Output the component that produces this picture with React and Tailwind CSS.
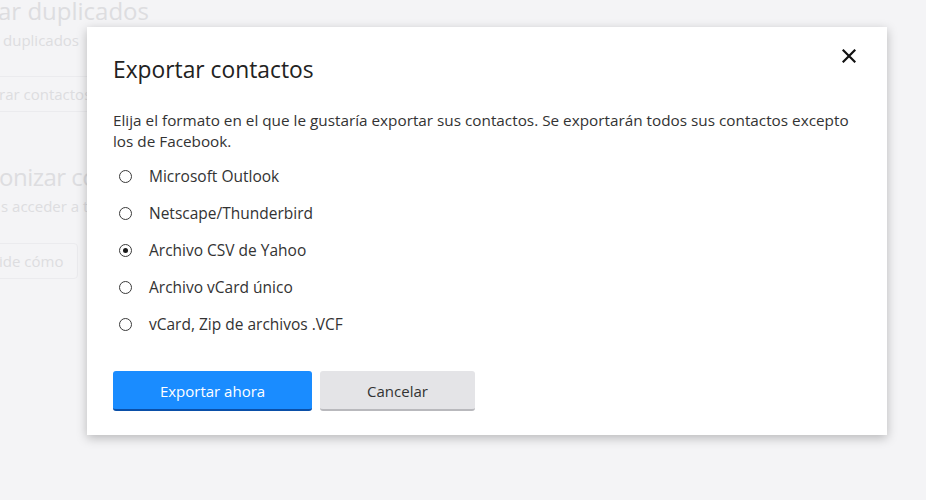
import React from "react";

const options = [
  "Microsoft Outlook",
  "Netscape/Thunderbird",
  "Archivo CSV de Yahoo",
  "Archivo vCard único",
  "vCard, Zip de archivos .VCF",
];

const Radio = ({ checked }) => (
  <span className="w-[13px] h-[13px] rounded-full border-[1.5px] border-[#3a3a3a] flex items-center justify-center shrink-0">
    {checked && <span className="w-[5px] h-[5px] rounded-full bg-[#1a1a1a]" />}
  </span>
);

export default function App() {
  const selected = 2;

  return (
    <div
      className="relative w-[926px] h-[500px] overflow-hidden bg-[#f4f4f6]"
      style={{ fontFamily: '"Open Sans", "Noto Sans", sans-serif' }}
    >
      {/* faded page behind the dialog */}
      <div className="flex flex-col text-[#dddde0] whitespace-nowrap">
        <p className="text-[24px] leading-[30px] -mt-[4px] -ml-[2px]">ar duplicados</p>
        <p className="text-[15px] leading-[20px] mt-[4px] ml-[3px]">duplicados</p>
        <div className="mt-[26px] -ml-[10px] w-[120px] h-[36px] border border-[#ebebee] rounded-[4px] flex items-center pl-[8px] text-[15px]">
          rar contactos
        </div>
        <p className="text-[24px] leading-[30px] mt-[50px] -ml-[1px] tracking-[-0.5px]">onizar con</p>
        <p className="text-[15px] leading-[20px] mt-[4px] ml-[1px]">s acceder a t</p>
        <div className="mt-[27px] -ml-[10px] w-[88px] h-[36px] border border-[#ebebee] rounded-[4px] flex items-center pl-[8px] text-[15px]">
          ide cómo
        </div>
      </div>

      {/* dialog */}
      <div className="absolute left-[87px] top-[27px] w-[800px] h-[408px] bg-white shadow-[0_3px_10px_rgba(0,0,0,0.25)] flex flex-col px-[26px] pt-[29px]">
        <button className="absolute right-[30px] top-[21px] w-[16px] h-[16px] flex items-center justify-center">
          <svg width="14" height="14" viewBox="0 0 14 14">
            <path d="M1.5 1.5 L12.5 12.5 M12.5 1.5 L1.5 12.5" stroke="#111" strokeWidth="2.2" strokeLinecap="square" />
          </svg>
        </button>

        <h2 className="text-[22.8px] leading-[28px] text-[#222]">Exportar contactos</h2>

        <p className="mt-[26px] text-[15.3px] leading-[21px] text-[#333]">
          Elija el formato en el que le gustaría exportar sus contactos. Se exportarán todos sus contactos excepto los de Facebook.
        </p>

        <div className="mt-[6px] flex flex-col">
          {options.map((o, i) => (
            <label key={o} className="h-[37px] flex items-center pl-[6px] gap-[17px] text-[15.5px] text-[#333]">
              <Radio checked={i === selected} />
              <span>{o}</span>
            </label>
          ))}
        </div>

        <div className="mt-[28px] flex gap-[8px]">
          <button className="w-[199px] h-[40px] pt-[2px] rounded-[3px] bg-[#1a8cff] border-b-2 border-[#0a4fa8] text-white text-[15px]">
            Exportar ahora
          </button>
          <button className="w-[155px] h-[40px] pt-[2px] rounded-[3px] bg-[#e4e4e7] border-b-2 border-[#b9b9bd] text-[#333] text-[15px]">
            Cancelar
          </button>
        </div>
      </div>
    </div>
  );
}
